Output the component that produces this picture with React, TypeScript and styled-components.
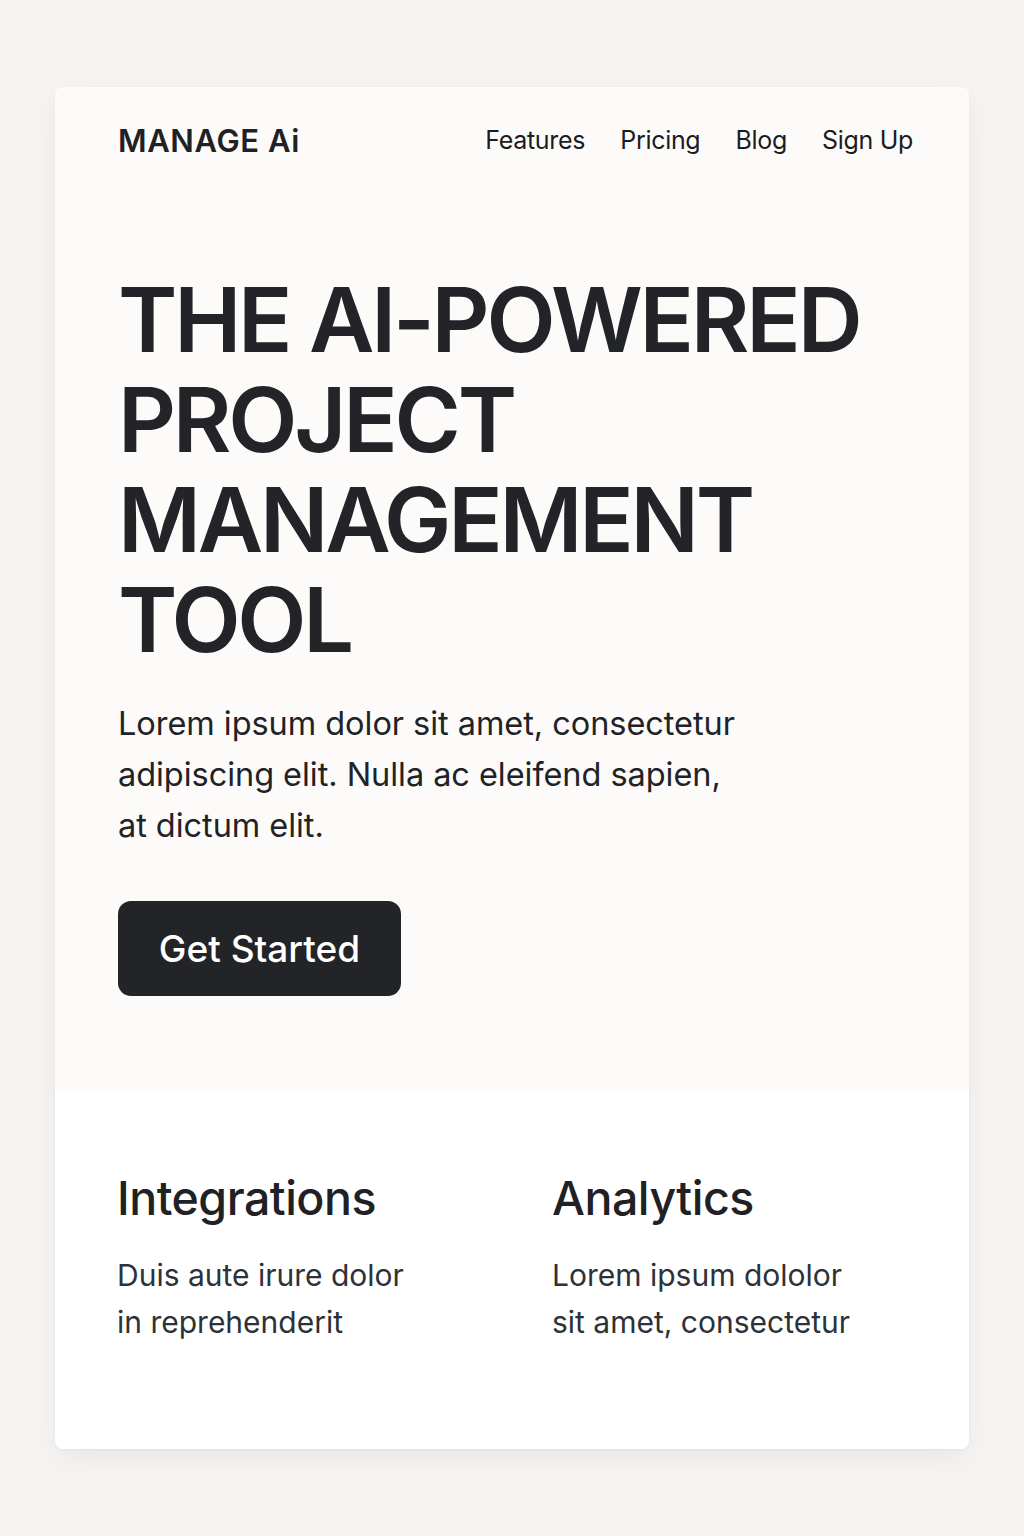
import React from "react";
import styled, { createGlobalStyle } from "styled-components";

const Global = createGlobalStyle`
  html, body { margin: 0; padding: 0; background: #f5f4f2; }
  body { font-family: Inter, "Noto Sans", "Liberation Sans", sans-serif; color: #1f2125; }
  * { box-sizing: border-box; }
`;

const Page = styled.div`
  min-height: 1536px;
  padding: 87px 55px 88px 55px;
`;

const Card = styled.div`
  width: 914px;
  background: #ffffff;
  border-radius: 8px;
  box-shadow: 0 10px 30px rgba(0, 0, 0, 0.05), 0 1px 3px rgba(0, 0, 0, 0.04);
  overflow: hidden;
`;

const Hero = styled.section`
  background: #fcfbfa;
  padding: 0 63px 93px 63px;
  display: flex;
  flex-direction: column;
`;

const Header = styled.header`
  height: 106px;
  display: flex;
  align-items: center;
  justify-content: space-between;
`;

const Logo = styled.div`
  font-size: 31px;
  font-weight: 600;
  letter-spacing: 0.6px;
  color: #1f2125;
`;

const Nav = styled.nav`
  display: flex;
  gap: 35px;
  margin-right: -7px;
`;

const NavLink = styled.a`
  font-size: 25px;
  font-weight: 400;
  letter-spacing: -0.3px;
  color: #1a1c1f;
  text-decoration: none;
`;

const Headline = styled.h1`
  margin: 77px 0 0 0;
  font-size: 90px;
  line-height: 100px;
  font-weight: 600;
  letter-spacing: -3.2px;
  color: #222428;
`;

const Lead = styled.p`
  margin: 28px 0 0 0;
  font-size: 32.5px;
  line-height: 51px;
  font-weight: 400;
  letter-spacing: -0.05px;
  color: #1f2327;
  max-width: 680px;
`;

const Button = styled.button`
  margin-top: 50px;
  align-self: flex-start;
  width: 283px;
  height: 95px;
  background: #222428;
  color: #ffffff;
  border: none;
  border-radius: 13px;
  font-family: inherit;
  font-size: 37px;
  font-weight: 500;
  cursor: pointer;
`;

const Features = styled.section`
  display: grid;
  grid-template-columns: 435px 1fr;
  padding: 81px 62px 103px 62px;
`;

const Feature = styled.div`
  display: flex;
  flex-direction: column;
`;

const FeatureTitle = styled.h2`
  margin: 0;
  font-size: 46.5px;
  line-height: 56px;
  font-weight: 500;
  letter-spacing: -0.5px;
  color: #1f2125;
`;

const FeatureText = styled.p`
  margin: 26px 0 0 0;
  font-size: 30px;
  line-height: 47px;
  font-weight: 400;
  color: #2c3237;
`;

export default function App() {
  return (
    <>
      <Global />
      <Page>
        <Card>
          <Hero>
            <Header>
              <Logo>MANAGE Ai</Logo>
              <Nav>
                <NavLink href="#">Features</NavLink>
                <NavLink href="#">Pricing</NavLink>
                <NavLink href="#">Blog</NavLink>
                <NavLink href="#">Sign Up</NavLink>
              </Nav>
            </Header>
            <Headline>
              THE AI-POWERED
              <br />
              PROJECT
              <br />
              MANAGEMENT
              <br />
              TOOL
            </Headline>
            <Lead>
              Lorem ipsum dolor sit amet, consectetur
              <br />
              adipiscing elit. Nulla ac eleifend sapien,
              <br />
              at dictum elit.
            </Lead>
            <Button>Get Started</Button>
          </Hero>
          <Features>
            <Feature>
              <FeatureTitle>Integrations</FeatureTitle>
              <FeatureText>
                Duis aute irure dolor
                <br />
                in reprehenderit
              </FeatureText>
            </Feature>
            <Feature>
              <FeatureTitle>Analytics</FeatureTitle>
              <FeatureText>
                Lorem ipsum dololor
                <br />
                sit amet, consectetur
              </FeatureText>
            </Feature>
          </Features>
        </Card>
      </Page>
    </>
  );
}
